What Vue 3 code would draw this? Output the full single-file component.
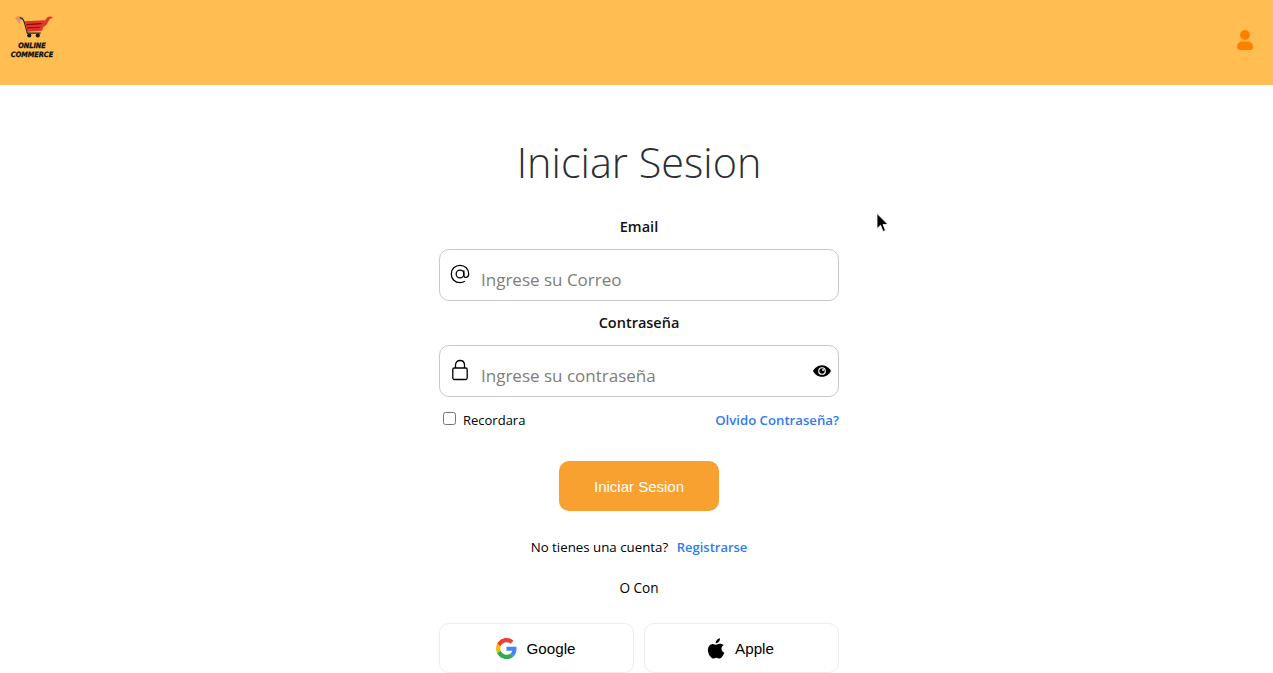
<template>
  <div class="page">
    <header class="topbar">
      <a class="logo" href="#">
        <svg class="logo-cart" viewBox="0 0 40 24" width="38" height="23">
          <path d="M0 3 C3 0.500 7 1 10 3 L6 4.500 L5 10 C3 7 1.500 5 0 3 Z" fill="#e88a70" opacity="0.85" />
          <path d="M5 3 C8 3 9 5 10 8 L13 19 L27 19" fill="none" stroke="#222" stroke-width="1.3" />
          <path d="M10 6.500 L32 5.500 L28.500 16.500 L13 17.500 Z" fill="#e8302a" />
          <path d="M12 10 L28 9 M13 13.500 L26 13" stroke="#7a1410" stroke-width="1.2" />
          <path d="M28 10 C31 9 31 5 34 2.500 C36 1 39 1 40 3.500 C37 3 36 5 35 7 C33.500 10.500 31 12.500 28 13 Z" fill="#e03a26" />
          <circle cx="15" cy="21.500" r="2.200" fill="#1a1a1a" />
          <circle cx="24" cy="21.500" r="2.200" fill="#1a1a1a" />
        </svg>
        <span class="logo-text">ONLINE<br />COMMERCE</span>
      </a>
      <button type="button" class="user-btn" aria-label="Usuario">
        <svg viewBox="0 0 16 20" width="16" height="20">
          <circle cx="8" cy="5" r="5" fill="#ff8000" />
          <path d="M0 17 C0 13 3 11.5 5 11.5 L11 11.5 C13 11.5 16 13 16 17 C16 19 15 20 13 20 L3 20 C1 20 0 19 0 17 Z" fill="#ff8000" />
        </svg>
      </button>
    </header>

    <main class="login">
      <h1 class="title">Iniciar Sesion</h1>

      <form class="login-form" @submit.prevent>
        <label class="field-label" for="email">Email</label>
        <div class="input-wrap">
          <svg class="input-icon" viewBox="0 0 24 24" width="22" height="22" fill="none" stroke="#000" stroke-width="1.4">
            <circle cx="12" cy="12" r="4.2" />
            <path d="M16.2 7.8 V13.5 C16.2 16.5 21.5 16.5 21.5 12 C21.5 6.5 17.5 2.5 12 2.5 C6.5 2.5 2.5 6.5 2.5 12 C2.5 17.5 6.5 21.5 12 21.5 C14 21.5 15.8 21 17.3 20" />
          </svg>
          <input id="email" v-model="email" type="email" placeholder="Ingrese su Correo" />
        </div>

        <label class="field-label" for="password">Contraseña</label>
        <div class="input-wrap">
          <svg class="input-icon" viewBox="0 0 18 22" width="18" height="22" fill="none" stroke="#000" stroke-width="1.3">
            <rect x="1.8" y="9" width="14.4" height="11.5" rx="1.5" />
            <path d="M4.5 9 V6 C4.5 3.2 6.5 1.5 9 1.5 C11.5 1.5 13.5 3.2 13.5 6 V9" />
          </svg>
          <input id="password" v-model="password" :type="showPassword ? 'text' : 'password'" placeholder="Ingrese su contraseña" />
          <button type="button" class="eye-btn" aria-label="Mostrar" @click="showPassword = !showPassword">
            <svg viewBox="0 0 20 14" width="18" height="14">
              <path d="M10 0.5 C5 0.5 1.5 4 0 7 C1.5 10 5 13.5 10 13.5 C15 13.5 18.5 10 20 7 C18.5 4 15 0.5 10 0.5 Z" fill="#000" />
              <circle cx="10" cy="7" r="4.3" fill="#fff" />
              <circle cx="10" cy="7" r="3" fill="#000" />
              <circle cx="11.2" cy="5.8" r="1.1" fill="#fff" />
            </svg>
          </button>
        </div>

        <div class="options">
          <label class="remember">
            <input v-model="remember" type="checkbox" />
            <span>Recordara</span>
          </label>
          <a class="link forgot" href="#">Olvido Contraseña?</a>
        </div>

        <button type="submit" class="submit-btn">Iniciar Sesion</button>

        <p class="register">No tienes una cuenta? <a class="link" href="#">Registrarse</a></p>
        <p class="divider">O Con</p>

        <div class="socials">
          <button type="button" class="social-btn">
            <svg viewBox="0 0 48 48" width="21" height="21">
              <path fill="#EA4335" d="M24 9.5c3.5 0 6.700 1.300 9.100 3.500l6.800-6.800C35.800 2.400 30.300 0 24 0 14.600 0 6.500 5.400 2.600 13.200l7.900 6.200C12.400 13.600 17.700 9.500 24 9.500z" />
              <path fill="#4285F4" d="M46.900 24.500c0-1.600-.1-3.100-.4-4.500H24v9h12.900c-.6 3-2.200 5.400-4.700 7.100l7.700 6c4.500-4.200 7-10.300 7-17.600z" />
              <path fill="#FBBC05" d="M10.500 28.600c-.5-1.400-.8-3-.8-4.600s.3-3.200.8-4.600l-7.900-6.200C.9 16.500 0 20.100 0 24s.9 7.500 2.600 10.800l7.900-6.200z" />
              <path fill="#34A853" d="M24 48c6.500 0 11.900-2.100 15.900-5.900l-7.700-6c-2.100 1.400-4.900 2.300-8.200 2.300-6.300 0-11.600-4.100-13.500-9.800l-7.900 6.200C6.500 42.600 14.600 48 24 48z" />
            </svg>
            <span>Google</span>
          </button>
          <button type="button" class="social-btn">
            <svg viewBox="0 0 18 21" width="18" height="21">
              <path fill="#000" d="M13 0.300 C13.100 1.600 12.600 2.800 11.900 3.700 C11.100 4.600 9.900 5.300 8.800 5.200 C8.600 4 9.200 2.700 9.900 1.900 C10.700 1 12 0.400 13 0.300 Z M16.700 7.100 C15.300 8 14.500 9.200 14.500 10.800 C14.500 12.700 15.600 14 17.300 14.700 C16.900 15.900 16.300 17.100 15.500 18.200 C14.700 19.300 13.800 20.500 12.500 20.500 C11.200 20.500 10.800 19.700 9.300 19.700 C7.800 19.700 7.300 20.500 6.100 20.500 C4.800 20.600 3.800 19.200 3 18.100 C1.300 15.700 0 11.400 1.800 8.400 C2.600 6.900 4.200 6 5.800 5.900 C7.100 5.900 8.300 6.800 9.100 6.800 C9.900 6.800 11.300 5.700 13 5.800 C13.700 5.900 15.500 6.100 16.700 7.100 Z" />
            </svg>
            <span>Apple</span>
          </button>
        </div>
      </form>
    </main>

    <svg class="cursor" viewBox="0 0 13 20" width="13" height="20">
      <path d="M1 0.500 V15.500 L4.600 12.300 L7 18.500 L9.500 17.500 L7 11.500 L12 11.500 Z" fill="#000" stroke="#fff" stroke-width="0.8" />
    </svg>
  </div>
</template>

<script setup>
import { ref } from 'vue';

const email = ref('');
const password = ref('');
const remember = ref(false);
const showPassword = ref(false);
</script>

<style>
html,
body {
  margin: 0;
  background: #fff;
  overflow: hidden;
}
</style>

<style scoped>
.page {
  position: relative;
  height: 673px;
  overflow: hidden;
  font-family: "Open Sans", "Noto Sans", "Liberation Sans", sans-serif;
  color: #000;
}

.topbar {
  height: 85px;
  box-sizing: border-box;
  background: #ffbd52;
  display: flex;
  align-items: flex-start;
  justify-content: space-between;
  padding: 15px 20px 0 11px;
}

.logo {
  display: flex;
  flex-direction: column;
  align-items: center;
  width: 42px;
  text-decoration: none;
  color: #000;
}

.logo-cart {
  display: block;
  margin-left: 3px;
}

.logo-text {
  margin-top: 3px;
  font-family: "DejaVu Sans Condensed", "DejaVu Sans", sans-serif;
  font-size: 7.3px;
  font-weight: 700;
  font-style: italic;
  line-height: 9px;
  text-align: center;
  white-space: nowrap;
  color: #111;
  -webkit-text-stroke: 0.3px #111;
}

.user-btn {
  border: 0;
  background: none;
  padding: 0;
  margin-top: 15px;
  height: 20px;
  cursor: pointer;
}

.user-btn svg {
  display: block;
}

.login {
  display: flex;
  flex-direction: column;
  align-items: center;
  padding-left: 5px;
}

.title {
  margin: 47px 0 0;
  font-size: 41.4px;
  font-weight: 300;
  line-height: 60px;
  color: #2b2f33;
}

.login-form {
  width: 400px;
  margin-top: 25px;
  display: flex;
  flex-direction: column;
}

.field-label {
  font-size: 14.500px;
  font-weight: 600;
  line-height: 20px;
  text-align: center;
  color: #111;
  margin-bottom: 12px;
}

.input-wrap {
  position: relative;
  height: 52px;
  margin-bottom: 12px;
}

.input-wrap input {
  width: 100%;
  height: 100%;
  box-sizing: border-box;
  border: 1px solid #c9c9c9;
  border-radius: 10px;
  padding: 8px 40px 0 41px;
  font-family: inherit;
  font-size: 17px;
  outline: none;
  background: #fff;
}

.input-wrap input::placeholder {
  color: #7d7d7d;
  opacity: 1;
}

.input-icon {
  position: absolute;
  left: 10px;
  top: 14px;
}

.input-wrap:nth-of-type(2) .input-icon {
  left: 12px;
}

.eye-btn {
  position: absolute;
  right: 8px;
  top: 19px;
  border: 0;
  background: none;
  padding: 0;
  height: 14px;
  cursor: pointer;
}

.eye-btn svg {
  display: block;
}

.options {
  display: flex;
  justify-content: space-between;
  align-items: center;
  margin-top: -1px;
  height: 24px;
  font-size: 13px;
}

.remember {
  display: flex;
  align-items: center;
  gap: 7px;
  padding-left: 4px;
}

.remember input {
  width: 13px;
  height: 13px;
  margin: 0 0 3px;
}

.link {
  color: #2f7cf0;
  font-weight: 600;
  text-decoration: none;
  font-size: 13px;
}

.forgot {
  font-size: 13.200px;
}

.submit-btn {
  align-self: center;
  width: 160px;
  height: 50px;
  margin-top: 29px;
  border: 0;
  border-radius: 10px;
  background: #f9a130;
  color: #fff;
  font-family: "Liberation Sans", sans-serif;
  font-size: 15px;
  cursor: pointer;
}

.register,
.divider {
  margin: 0;
  text-align: center;
  font-size: 13.300px;
  line-height: 20px;
}

.register {
  margin-top: 26px;
}

.register .link {
  margin-left: 5px;
}

.divider {
  margin-top: 21px;
  font-size: 13.600px;
}

.socials {
  display: grid;
  grid-template-columns: 1fr 1fr;
  gap: 10px;
  margin-top: 25px;
}

.social-btn {
  height: 50px;
  border: 1px solid #ececec;
  border-radius: 10px;
  background: #fff;
  display: flex;
  align-items: center;
  justify-content: center;
  gap: 10px;
  padding: 0 2px 0 0;
  font-family: "Liberation Sans", sans-serif;
  font-size: 15.200px;
  color: #000;
  cursor: pointer;
}

.cursor {
  position: absolute;
  left: 876px;
  top: 213px;
}
</style>
